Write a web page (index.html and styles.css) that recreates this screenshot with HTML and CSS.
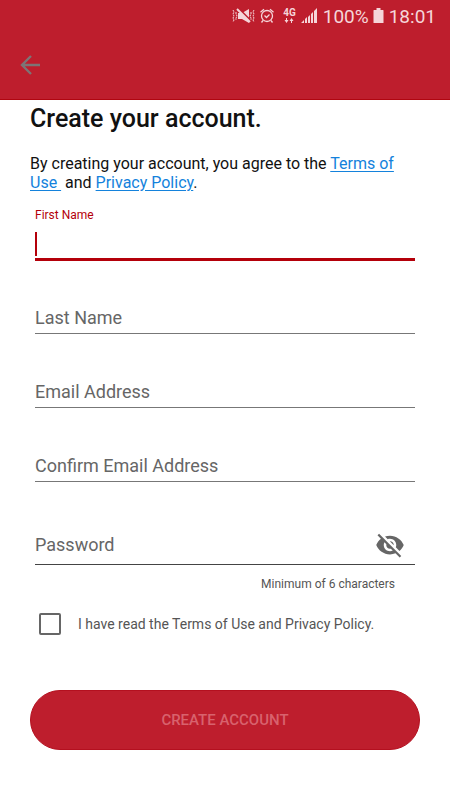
FILE: index.html
```html
<!DOCTYPE html>
<html lang="en">
<head>
<meta charset="utf-8">
<meta name="viewport" content="width=device-width, initial-scale=1">
<title>Create your account</title>
<link rel="stylesheet" href="styles.css">
</head>
<body>
<header class="top">
  <div class="status">
    <svg class="mute" width="24" height="18" viewBox="0 0 24 18" fill="currentColor" aria-hidden="true">
      <path d="M6 6h4l7-4v14l-7-4H6z"/>
      <path d="M6 1l13 13" stroke="#be1e2d" stroke-width="2"/>
      <path d="M5 2l13 13" fill="none" stroke="currentColor" stroke-width="2"/>
      <path d="M1 3l1 2-1 2 1 2-1 2 1 2-1 2M4 5v2l1 2-1 2v2M22 3l-1 2 1 2-1 2 1 2-1 2 1 2M19 5v2l-1 2 1 2v2" fill="none" stroke="currentColor" stroke-width="1" stroke-dasharray="2 .6"/>
    </svg>
    <svg class="alarm" width="16" height="18" viewBox="0 0 16 18" fill="none" stroke="currentColor" stroke-width="1.3" aria-hidden="true">
      <circle cx="8" cy="9" r="5.500"/><path d="M1.500 5.200L5 2.200M14.500 5.200l-3.500-3M5.500 8.500l2 2 3-3M4 13.500l-1.500 2M12 13.500l1.500 2"/>
    </svg>
    <span class="net"><span>4G</span>
      <svg width="10" height="7" viewBox="0 0 10 7" fill="currentColor" aria-hidden="true"><path d="M2 1h1v2h1.500l-2 3-2-3H2zM7 6h1V4h1.500l-2-3-2 3H7z"/></svg>
    </span>
    <svg class="signal" width="17" height="18" viewBox="0 0 17 18" fill="currentColor" aria-hidden="true">
      <path d="M0 16l3-3v3zM4 16v-4l2-2v6zM7 16v-6l2-2v8zM10 16V7l2-2v11zM13 16V4l3-3v15z"/>
    </svg>
    <span class="percent">100%</span>
    <svg class="battery" width="11" height="18" viewBox="0 0 11 18" fill="currentColor" aria-hidden="true"><path d="M3.500 1h4v2H10q.5 0 .5.500V16H.5V3.500Q.5 3 1 3h2.500z"/></svg>
    <span class="time">18:01</span>
  </div>
  <button class="back" type="button" aria-label="Back">
    <svg width="20" height="20" viewBox="0 0 20 20" fill="none" stroke="currentColor" stroke-width="2.400" aria-hidden="true"><path d="M20 10H2M11 1l-9 9 9 9"/></svg>
  </button>
</header>
<main class="page">
  <h1>Create your account.</h1>
  <p class="legal">By creating your account, you agree to the <a href="#terms">Terms of Use&nbsp;</a> and <a href="#privacy">Privacy Policy</a>.</p>
  <form>
    <div class="fields">
      <div class="field active">
        <label for="first">First Name</label>
        <input id="first" type="text">
      </div>
      <div class="field">
        <label for="last">Last Name</label>
        <input id="last" type="text">
      </div>
      <div class="field">
        <label for="email">Email Address</label>
        <input id="email" type="email">
      </div>
      <div class="field">
        <label for="confirm">Confirm Email Address</label>
        <input id="confirm" type="email">
      </div>
      <div class="field password">
        <label for="password">Password</label>
        <input id="password" type="password" aria-describedby="hint">
        <button class="reveal" type="button" aria-label="Show password">
          <svg width="30" height="30" viewBox="0 0 24 24" fill="currentColor" aria-hidden="true"><path d="M12 7c2.760 0 5 2.240 5 5 0 .65-.13 1.260-.36 1.830l2.920 2.920c1.510-1.260 2.700-2.890 3.430-4.750-1.730-4.390-6-7.500-11-7.500-1.400 0-2.740.25-3.980.7l2.160 2.160C10.740 7.130 11.350 7 12 7zM2 4.270l2.280 2.280.46.46C3.080 8.300 1.780 10.020 1 12c1.730 4.390 6 7.500 11 7.500 1.550 0 3.030-.3 4.380-.84l.42.42L19.730 22 21 20.730 3.270 3 2 4.270zM7.530 9.800l1.550 1.550c-.05.21-.08.43-.08.65 0 1.660 1.340 3 3 3 .22 0 .44-.03.65-.08l1.550 1.550c-.67.33-1.410.53-2.200.53-2.760 0-5-2.240-5-5 0-.79.2-1.530.53-2.200zm4.310-.78l3.150 3.150.02-.16c0-1.660-1.340-3-3-3l-.17.01z"/></svg>
        </button>
      </div>
    </div>
    <p class="hint" id="hint">Minimum of 6 characters</p>
    <div class="consent">
      <input id="agree" type="checkbox">
      <label for="agree">I have read the Terms of Use and Privacy Policy.</label>
    </div>
    <button class="submit" type="submit" disabled>CREATE ACCOUNT</button>
  </form>
</main>
</body>
</html>
```
FILE: styles.css
```css
* {
  box-sizing: border-box;
}

body {
  margin: 0;
  background: #fff;
  color: #111;
  font-family: Roboto, "Liberation Sans", sans-serif;
}

button {
  padding: 0;
  border: 0;
  background: none;
  font-family: inherit;
}

svg {
  display: block;
}

.top {
  height: 100px;
  background: #be1e2d;
  border-bottom: 1px solid #b00610;
}

.status {
  display: flex;
  justify-content: flex-end;
  align-items: center;
  height: 32px;
  padding-right: 14px;
  color: #f5d5d9;
  font-size: 19px;
}

.alarm {
  margin-left: 3px;
}

.net {
  display: flex;
  flex-direction: column;
  align-items: center;
  margin: 0 5px 0 8px;
  font-size: 10px;
  font-weight: 700;
  line-height: 9px;
}

.percent {
  margin: 0 4px 0 5px;
}

.time {
  margin-left: 5px;
}

.back {
  display: block;
  margin: 23px 0 0 20px;
  color: #7d7475;
}

.page {
  padding: 0 30px 50px;
}

h1 {
  margin: 0;
  padding-top: 3px;
  font-size: 25px;
  font-weight: 500;
  line-height: 32px;
}

.legal {
  margin: 19px 0 0;
  font-size: 16px;
  line-height: 19px;
}

.legal a {
  color: #1482dc;
  text-underline-offset: 2px;
}

.fields {
  display: grid;
  gap: 18px;
  margin: 12px 5px 0;
}

.field {
  display: grid;
  grid-template-columns: 1fr auto;
  grid-template-rows: 18px 38px;
}

.field label {
  grid-area: 2 / 1;
  align-self: center;
  padding-top: 6px;
  color: #666;
  font-size: 18px;
  line-height: 24px;
}

.field input {
  grid-area: 2 / 1 / 3 / 3;
  width: 100%;
  padding: 0;
  border: 0;
  border-bottom: 1px solid #777;
  border-radius: 0;
  outline: 0;
  background: transparent;
  color: inherit;
  font: inherit;
  font-size: 18px;
}

.field.active label {
  grid-area: 1 / 1;
  padding-top: 4px;
  color: #b4000a;
  font-size: 12px;
  line-height: 18px;
}

.field.active input {
  border-bottom: 2px solid #b4000a;
  box-shadow: 0 1px #b4000a;
  background: linear-gradient(#b4000a, #b4000a) 0 10px / 2px 24px no-repeat;
}

.field.password {
  grid-template-rows: 18px 47px;
}

.password input {
  border-bottom-color: #444;
}

.reveal {
  grid-area: 2 / 2;
  align-self: center;
  margin-right: 10px;
  padding-top: 6px;
  color: #666;
}

.hint {
  margin: 10px 20px 0 0;
  padding-right: 5px;
  color: #555;
  font-size: 12px;
  line-height: 18px;
  text-align: right;
}

.consent {
  display: flex;
  align-items: center;
  gap: 17px;
  margin: 20px 0 0 9px;
  color: #555;
  font-size: 14px;
  line-height: 22px;
}

.consent input {
  appearance: none;
  width: 22px;
  height: 22px;
  margin: 0;
  border: 2px solid #666;
  border-radius: 2px;
}

.submit {
  display: block;
  width: 100%;
  height: 60px;
  margin-top: 55px;
  border: 1px solid #b4101f;
  border-radius: 30px;
  background: #be1e2d;
  color: #d8626d;
  font-size: 15px;
  font-weight: 500;
}
```
